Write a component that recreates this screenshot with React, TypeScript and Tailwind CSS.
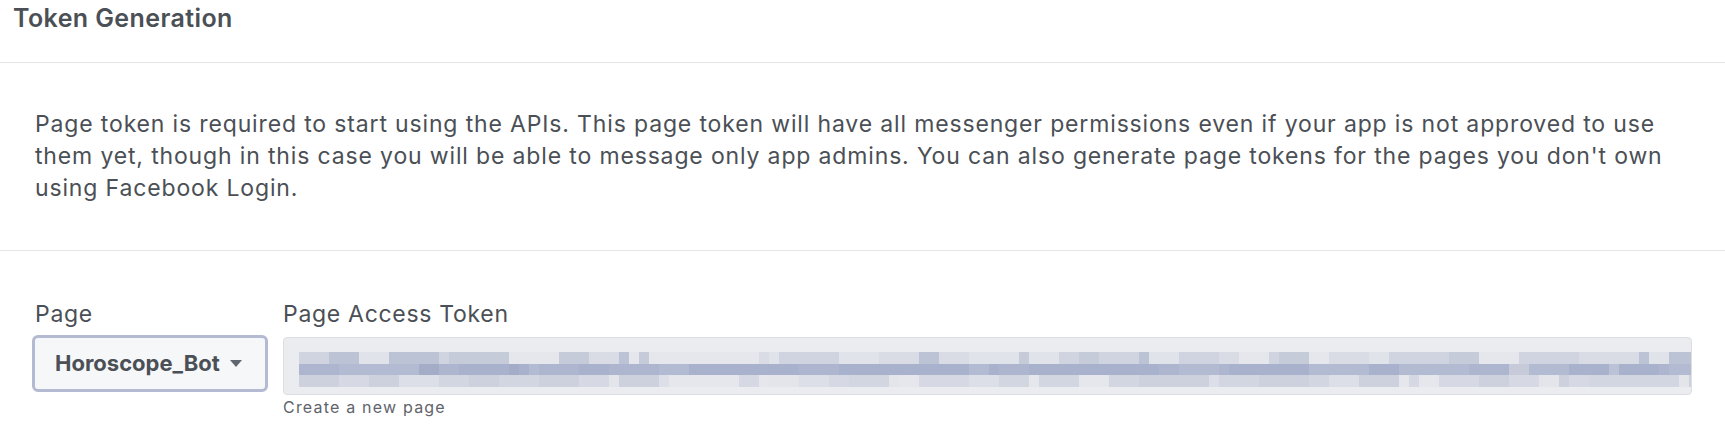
import React from 'react';

const TEXT = 'text-[#4b4f56]';

// deterministic pseudo-random so the blurred token looks the same each render
const rand = (seed: number) => {
  let s = seed;
  return () => {
    s = (s * 1103515245 + 12345) % 2147483648;
    return s / 2147483648;
  };
};

const ROWS = [
  ['#c6cbda', '#d0d4e0', '#d9dce5', '#e1e3ea', '#e6e7ed', '#bcc3d5'],
  ['#a9b2cc', '#aeb6cf', '#b3bbd2', '#a4adc8', '#bcc2d6', '#c6cad9'],
  ['#d6d9e3', '#dcdfe7', '#e3e5eb', '#cdd1de', '#e6e7ec', '#d2d6e1'],
];

const BlurredToken = () => {
  const r = rand(7);
  const width = 1392;
  const rects: React.ReactNode[] = [];
  ROWS.forEach((palette, row) => {
    let x = 0;
    while (x < width) {
      const w = 10 * (1 + Math.floor(r() * 4));
      const bias = row === 1 ? r() * r() : r();
      const fill = palette[Math.floor(bias * palette.length)];
      rects.push(<rect key={`${row}-${x}`} x={x} y={row * 11.5} width={w} height={11.5} fill={fill} />);
      x += w;
    }
  });
  return (
    <svg width={width} height={34.5} viewBox={`0 0 ${width} 34.5`} className="block" shapeRendering="crispEdges">
      {rects}
    </svg>
  );
};

const Caret = () => (
  <svg width="12" height="7" viewBox="0 0 12 7" className="block">
    <path d="M0 0h12L6 7z" fill="#606770" />
  </svg>
);

export default function App() {
  return (
    <div className={`w-[1725px] h-[427px] bg-white overflow-hidden font-[Inter,sans-serif] ${TEXT}`}>
      {/* Header */}
      <div className="h-[63px] pl-[13px] pt-[2px] border-b border-[#e3e4e8]">
        <h2 className="text-[25px] leading-[32px] font-semibold tracking-[0.4px]">Token Generation</h2>
      </div>

      {/* Description */}
      <div className="h-[188px] pl-[35px] pr-[35px] pt-[45px] border-b border-[#e3e4e8]">
        <p className="text-[23px] leading-[32px] tracking-[0.85px]">
          Page token is required to start using the APIs. This page token will have all messenger permissions even if
          your app is not approved to use them yet, though in this case you will be able to message only app admins.
          You can also generate page tokens for the pages you don't own using Facebook Login.
        </p>
      </div>

      {/* Form */}
      <div className="flex gap-[15px] pl-[32px] pr-[35px] pt-[47px]">
        <div className="flex flex-col">
          <label className="text-[23px] leading-[32px] tracking-[0.7px] pl-[3px] mb-[5px]">Page</label>
          <button className="h-[57px] w-[236px] flex items-center justify-between pl-[20px] pr-[23px] rounded-[6px] border-[3px] border-[#b3bad1] bg-[#f6f7f9]">
            <span className="text-[22px] font-bold text-[#4b4f56]">Horoscope_Bot</span>
            <Caret />
          </button>
        </div>

        <div className="flex-1 flex flex-col">
          <label className="text-[23px] leading-[32px] tracking-[0.7px] mb-[5px]">Page Access Token</label>
          <div className="mt-[2px] h-[58px] rounded-[4px] border border-[#dcdee3] bg-[#ebecf0] pl-[15px] pt-[14px] overflow-hidden">
            <BlurredToken />
          </div>
          <span className="mt-[2px] text-[16px] leading-[20px] tracking-[1.2px] text-[#5f636b]">Create a new page</span>
        </div>
      </div>
    </div>
  );
}
